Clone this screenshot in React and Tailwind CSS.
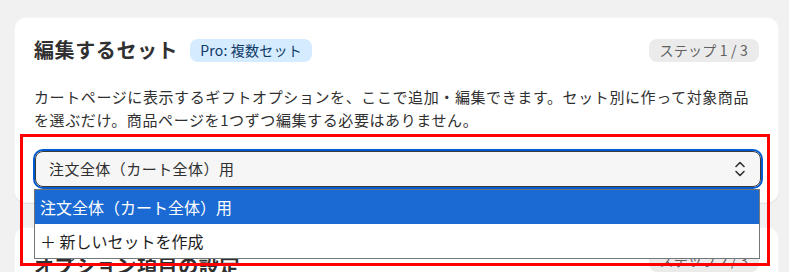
import React from "react";

const font = { fontFamily: '"Noto Sans CJK JP", "Noto Sans", Inter, sans-serif' };

function Chevrons() {
  return (
    <svg width="12" height="18" viewBox="0 0 12 18" fill="none" stroke="#303030" strokeWidth="1.6" strokeLinecap="round" strokeLinejoin="round">
      <path d="M2 6.5 L6 2.5 L10 6.5" />
      <path d="M2 11.5 L6 15.5 L10 11.5" />
    </svg>
  );
}

export default function App() {
  return (
    <div
      className="relative w-[789px] h-[272px] overflow-hidden bg-[#f1f1f1] pt-[17px] pl-[14px] pr-[10px] text-[#303030]"
      style={font}
    >
      {/* Card 1 */}
      <div className="rounded-[12px] bg-white pt-[20px] pb-[14px] px-[20px] shadow-[0_1px_0_rgba(26,26,26,0.07),inset_0_0_0_1px_rgba(0,0,0,0.04)]">
        <div className="flex items-center justify-between h-[26px]">
          <div className="flex items-center gap-[12px]">
            <h2 className="text-[20px] font-bold tracking-[0.6px] leading-none text-[#303030]">編集するセット</h2>
            <span className="rounded-[8px] bg-[#d5ebff] px-[10px] h-[23px] flex items-center text-[14px] leading-none text-[#0d3a66] tracking-[0.2px]">
              Pro: 複数セット
            </span>
          </div>
          <span className="rounded-[8px] bg-[#ebebeb] px-[11px] h-[23px] flex items-center text-[14px] leading-none text-[#616161] tracking-[0.2px]">
            ステップ 1 / 3
          </span>
        </div>
        <p className="mt-[22px] text-[15px] leading-[23px] tracking-[0.6px] text-[#303030]">
          カートページに表示するギフトオプションを、ここで追加・編集できます。セット別に作って対象商品を選ぶだけ。商品ページを1つずつ編集する必要はありません。
        </p>
        <div className="relative mt-[18px] -ml-[1px] -mr-[4px]">
          <div className="rounded-[10px] border-2 border-[#005bd3]">
            <div className="flex items-center justify-between h-[36px] rounded-[8px] border border-[#3a3a3a] bg-[#f6f6f6] pl-[13px] pr-[14px]">
              <span className="text-[15px] tracking-[0.45px] text-[#303030]">注文全体（カート全体）用</span>
              <Chevrons />
            </div>
          </div>
          {/* Open listbox */}
          <div className="absolute left-[1px] right-[3px] top-[40px] z-10 border border-[#767676] bg-white">
            <div className="h-[34px] flex items-center bg-[#1b69d3] pl-[5px] text-[16px] text-white">
              注文全体（カート全体）用
            </div>
            <div className="h-[34px] flex items-center pl-[5px] text-[16px] text-[#1f1f1f]">
              ＋ 新しいセットを作成
            </div>
          </div>
        </div>
      </div>

      {/* Card 2 */}
      <div className="mt-[24px] rounded-[12px] bg-white pt-[20px] px-[20px] h-[80px] shadow-[0_1px_0_rgba(26,26,26,0.07),inset_0_0_0_1px_rgba(0,0,0,0.04)]">
        <div className="flex items-center justify-between h-[26px]">
          <h2 className="text-[20px] font-bold tracking-[0.6px] leading-none text-[#303030] mt-[12px]">オプション項目の設定</h2>
          <span className="rounded-[8px] bg-[#ebebeb] px-[11px] h-[23px] flex items-center text-[14px] leading-none text-[#616161] tracking-[0.2px]">
            ステップ 2 / 3
          </span>
        </div>
      </div>

      {/* Red annotation box */}
      <div className="absolute left-[19.5px] top-[134px] w-[750px] h-[132px] border-[3px] border-[#ff0000] z-20 pointer-events-none" />
    </div>
  );
}
